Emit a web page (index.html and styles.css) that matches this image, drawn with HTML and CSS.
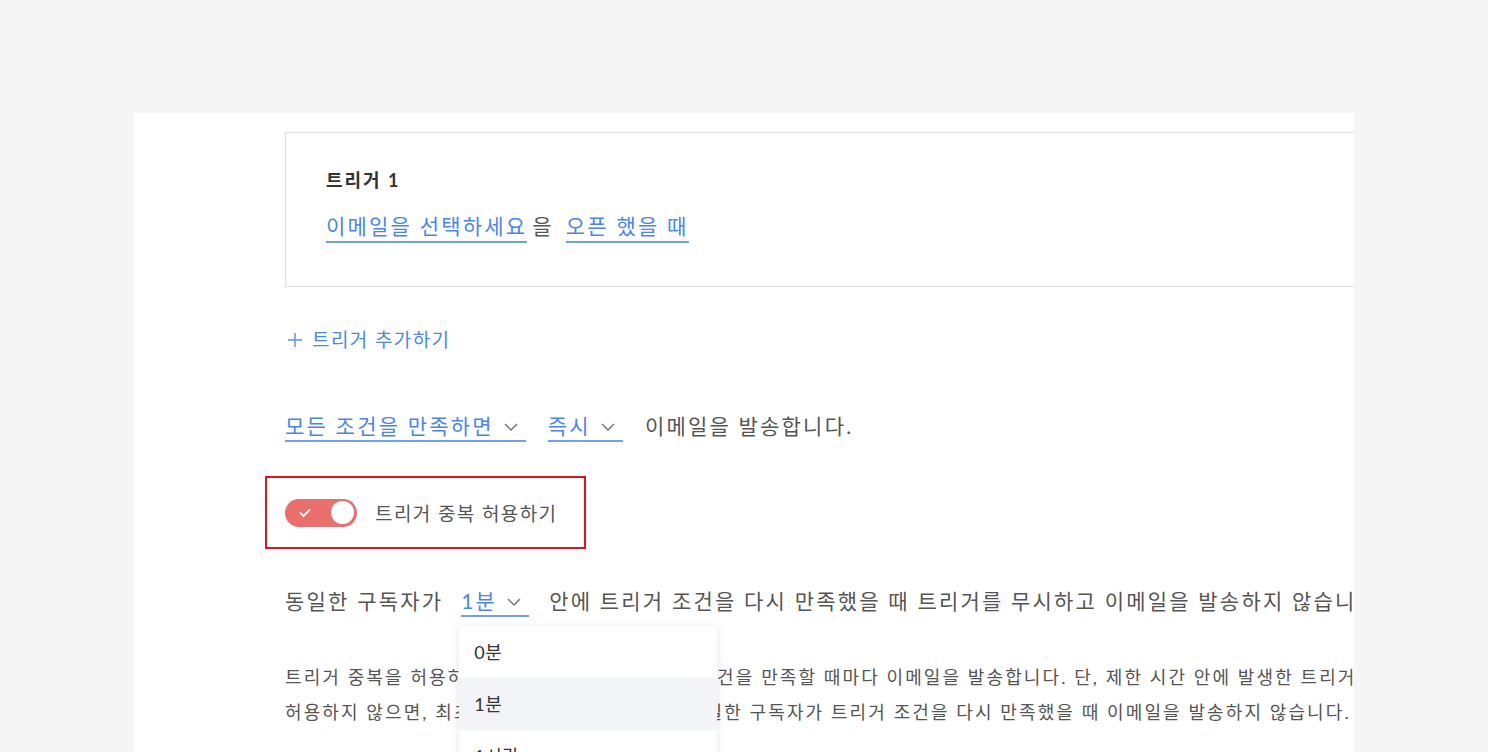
FILE: index.html
```html
<!DOCTYPE html>
<html lang="ko">
<head>
<meta charset="utf-8">
<link rel="stylesheet" href="styles.css">
</head>
<body>
<div class="panel">
  <div class="content">
    <div class="trigger-box">
      <div class="trigger-title">트리거 1</div>
      <div class="trigger-row">
        <span class="link">이메일을 선택하세요</span>
        <span class="plain eul">을</span>
        <span class="link">오픈 했을 때</span>
      </div>
    </div>

    <div class="add-trigger"><svg class="plus" viewBox="0 0 14 14"><path d="M7 0v14M0 7h14"/></svg><span>트리거 추가하기</span></div>

    <div class="cond-row">
      <span class="select">모든 조건을 만족하면<svg class="chev" viewBox="0 0 14 8"><path d="M1 1l6 6 6-6"/></svg></span>
      <span class="select">즉시<svg class="chev" viewBox="0 0 14 8"><path d="M1 1l6 6 6-6"/></svg></span>
      <span class="plain">이메일을 발송합니다.</span>
    </div>

    <div class="toggle-wrap">
      <div class="toggle">
        <svg class="check" viewBox="0 0 12 10"><path d="M1.5 5.2l3 2.8 6-6"/></svg>
        <span class="knob"></span>
      </div>
      <span class="toggle-label">트리거 중복 허용하기</span>
    </div>

    <div class="same-row">
      <span class="plain">동일한 구독자가</span>
      <span class="select menu-anchor">1분<svg class="chev" viewBox="0 0 14 8"><path d="M1 1l6 6 6-6"/></svg>
        <div class="dropdown">
          <div class="item">0분</div>
          <div class="item active">1분</div>
          <div class="item">1시간</div>
        </div>
      </span>
      <span class="plain after">안에 트리거 조건을 다시 만족했을 때 트리거를 무시하고 이메일을 발송하지 않습니다.</span>
    </div>

    <div class="desc">
      <p>트리거 중복을 허용하면 동일한 구독자가 트리거 조건을 만족할 때마다 이메일을 발송합니다. 단, 제한 시간 안에 발생한 트리거는 무시합니다.</p>
      <p>허용하지 않으면, 최초 발송 후, 제한 시간 동안 동일한 구독자가 트리거 조건을 다시 만족했을 때 이메일을 발송하지 않습니다.</p>
    </div>
  </div>
</div>
</body>
</html>
```

FILE: styles.css
```css
html, body {
  margin: 0;
  padding: 0;
  height: 100%;
  background: #f5f5f5;
  overflow: hidden;
}
body {
  font-family: "Lato", "Noto Sans CJK KR", sans-serif;
  color: #555;
}
.panel {
  margin-left: 134px;
  margin-top: 113px;
  width: 1220px;
  height: 639px;
  background: #fff;
  overflow: hidden;
}
.content {
  padding: 19px 0 0 151px;
  white-space: nowrap;
}
.trigger-box {
  width: 1200px;
  height: 155px;
  box-sizing: border-box;
  border: 1px solid #dedede;
  padding: 35px 0 0 40px;
}
.trigger-title {
  font-size: 18px;
  font-weight: 700;
  color: #333;
  line-height: 24px;
  letter-spacing: 2px;
}
.trigger-row {
  margin-top: 20px;
  display: flex;
  align-items: baseline;
  font-size: 21px;
  line-height: 28px;
  letter-spacing: 2.2px;
}
.eul { margin: 0 12px 0 5px; }
.link, .select {
  color: #4a86e8;
  border-bottom: 2px solid #6e9ff0;
  padding-bottom: 1px;
}
.plain { color: #555; }
.add-trigger {
  margin-top: 40px;
  margin-left: 3px;
  color: #4a86e8;
  font-size: 19px;
  line-height: 26px;
  letter-spacing: 1.4px;
  display: flex;
  align-items: center;
  gap: 10px;
}
.plus {
  width: 14px;
  height: 14px;
  fill: none;
  stroke: #5a90ea;
  stroke-width: 1.4;
}
.cond-row, .same-row {
  display: flex;
  align-items: baseline;
  gap: 22px;
  font-size: 21px;
  line-height: 28px;
  letter-spacing: 2.2px;
}
.cond-row { margin-top: 59px; }
.select {
  display: inline-flex;
  align-items: center;
  gap: 10px;
  padding-bottom: 0;
}
.chev {
  width: 14px;
  height: 8px;
  fill: none;
  stroke: #777;
  stroke-width: 1.5;
  margin-right: 8px;
  margin-top: 2px;
}
.toggle-wrap {
  margin-top: 34px;
  margin-left: -20px;
  width: 321px;
  height: 73px;
  box-sizing: border-box;
  border: 2px solid #e0141b;
  display: flex;
  align-items: center;
  padding-left: 18px;
  gap: 18px;
}
.toggle {
  width: 72px;
  height: 28px;
  border-radius: 14px;
  background: #e86f6b;
  display: flex;
  align-items: center;
  justify-content: space-between;
  padding: 0 3px 0 14px;
  box-sizing: border-box;
}
.check {
  width: 12px;
  height: 10px;
  fill: none;
  stroke: #fff;
  stroke-width: 1.8;
  stroke-linecap: round;
  stroke-linejoin: round;
}
.knob {
  width: 23px;
  height: 23px;
  border-radius: 50%;
  background: #fff;
}
.toggle-label {
  font-size: 19px;
  color: #555;
  letter-spacing: 1.4px;
}
.same-row {
  margin-top: 38px;
  gap: 18px;
}
.same-row .after { margin-left: 2px; }
.menu-anchor { position: relative; }
.dropdown {
  position: absolute;
  left: -2px;
  top: calc(100% + 11px);
  width: 258px;
  background: #fff;
  box-shadow: 0 2px 10px rgba(0,0,0,0.10);
  z-index: 5;
  letter-spacing: 0.5px;
}
.item {
  height: 52px;
  line-height: 52px;
  padding-left: 15px;
  font-size: 18px;
  color: #333;
}
.item.active { background: #f3f4f7; }
.desc {
  margin-top: 43px;
  font-size: 18px;
  line-height: 35px;
  color: #555;
  letter-spacing: 2.1px;
}
.desc p { margin: 0; }
```
